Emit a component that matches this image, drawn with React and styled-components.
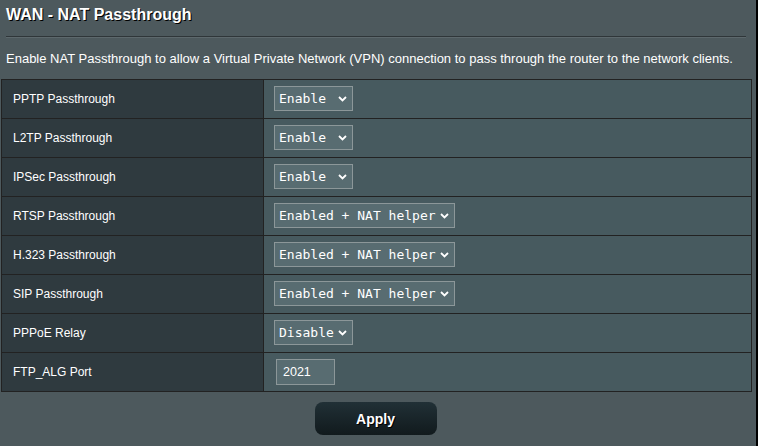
import React from "react";
import styled, { createGlobalStyle } from "styled-components";

const Global = createGlobalStyle`
  html, body { margin: 0; padding: 0; background: #000; }
  body { font-family: "Liberation Sans", Arial, sans-serif; }
`;

const Page = styled.div`
  width: 756px;
  min-height: 446px;
  background: #4d595d;
  box-sizing: border-box;
  padding-top: 5px;
  color: #fff;
`;

const Title = styled.h1`
  margin: 0;
  padding: 0 0 0 6px;
  font-size: 16px;
  font-weight: bold;
  line-height: 20px;
  text-shadow: 1px 1px 0 #000;
`;

const Rule = styled.div`
  margin: 11px 10px 0 6px;
  height: 1px;
  background: #2f3639;
  border-bottom: 1px solid #5d686c;
`;

const Desc = styled.p`
  margin: 0;
  padding: 13px 0 12px 6px;
  font-size: 13px;
  line-height: 16px;
  height: 16px;
`;

const Table = styled.div`
  margin-left: 1px;
  width: 751px;
  border: 1px solid #222;
  box-sizing: border-box;
  display: grid;
  grid-template-columns: 262px 1fr;
`;

const Label = styled.div`
  background: #2f3a3f;
  height: 37px;
  padding-bottom: 1px;
  display: flex;
  align-items: center;
  padding-left: 11px;
  font-size: 12px;
  border-right: 1px solid #222;
  border-top: ${(p) => (p.$first ? "none" : "1px solid #222")};
`;

const Value = styled.div`
  background: #475a5f;
  height: 37px;
  padding-bottom: 1px;
  display: flex;
  align-items: center;
  padding-left: ${(p) => (p.$input ? "12px" : "10px")};
  border-top: ${(p) => (p.$first ? "none" : "1px solid #222")};
`;

const SelectBox = styled.div`
  box-sizing: border-box;
  width: ${(p) => p.$w}px;
  height: 25px;
  border: 1px solid #8c9799;
  background: #586c71;
  display: flex;
  align-items: center;
  justify-content: space-between;
  padding: 0 5px 0 4px;
  font-family: "DejaVu Sans Mono", monospace;
  font-size: 13px;
  color: #fff;
`;

const Chevron = styled.svg`
  width: 9px;
  height: 6px;
  display: block;
`;

const InputBox = styled.div`
  box-sizing: border-box;
  width: 59px;
  height: 26px;
  border: 1px solid #8c9799;
  background: #586c71;
  display: flex;
  align-items: center;
  padding-left: 6px;
  font-family: "Liberation Sans", Arial, sans-serif;
  font-size: 12.5px;
  color: #fff;
`;

const Footer = styled.div`
  display: flex;
  justify-content: center;
  width: 751px;
  padding-top: 10px;
`;

const Button = styled.button`
  width: 122px;
  height: 33px;
  border: none;
  border-radius: 8px;
  background: linear-gradient(#213036 0%, #111a1d 100%);
  color: #fff;
  font-family: "Liberation Sans", Arial, sans-serif;
  font-size: 14px;
  font-weight: bold;
  text-shadow: 1px 1px 0 #000;
  cursor: pointer;
`;

const Select = ({ value, w }) => (
  <SelectBox $w={w}>
    <span>{value}</span>
    <Chevron viewBox="0 0 9 6">
      <path d="M1 1 L4.5 4.5 L8 1" fill="none" stroke="#fff" strokeWidth="1.8" />
    </Chevron>
  </SelectBox>
);

const rows = [
  ["PPTP Passthrough", "Enable", 79],
  ["L2TP Passthrough", "Enable", 79],
  ["IPSec Passthrough", "Enable", 79],
  ["RTSP Passthrough", "Enabled + NAT helper", 181],
  ["H.323 Passthrough", "Enabled + NAT helper", 181],
  ["SIP Passthrough", "Enabled + NAT helper", 181],
  ["PPPoE Relay", "Disable", 79],
];

export default function App() {
  return (
    <>
      <Global />
      <Page>
        <Title>WAN - NAT Passthrough</Title>
        <Rule />
        <Desc>
          Enable NAT Passthrough to allow a Virtual Private Network (VPN) connection to pass through the router to the network clients.
        </Desc>
        <Table>
          {rows.map(([label, val, w], i) => (
            <React.Fragment key={label}>
              <Label $first={i === 0}>{label}</Label>
              <Value $first={i === 0}>
                <Select value={val} w={w} />
              </Value>
            </React.Fragment>
          ))}
          <Label>FTP_ALG Port</Label>
          <Value $input>
            <InputBox>2021</InputBox>
          </Value>
        </Table>
        <Footer>
          <Button>Apply</Button>
        </Footer>
      </Page>
    </>
  );
}
